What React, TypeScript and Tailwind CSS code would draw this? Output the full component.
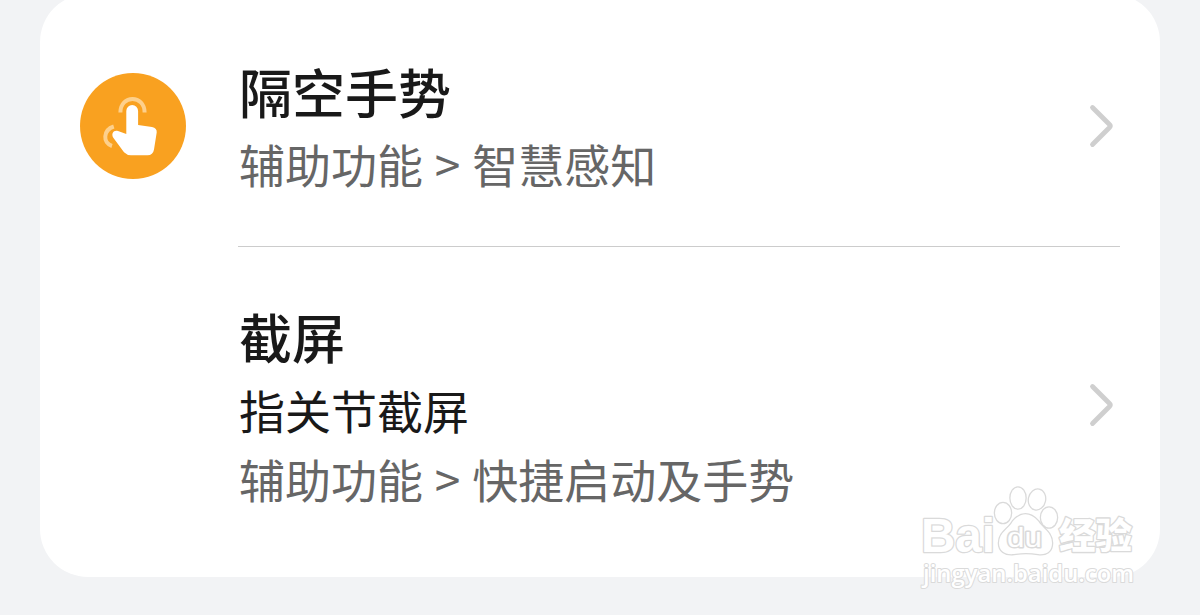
import React from "react";

interface SettingRowProps {
  title: string;
  detail?: string;
  path: string;
}

const GestureIcon = () => (
  <svg className="block size-[106px]" viewBox="0 0 106 106" fill="none">
    <circle cx="53" cy="53" r="53" fill="#F9A120" />
    <path
      d="M46.3 38a5.9 5.9 0 0 1 11.8 0V52L72 54Q77.2 55 76.7 59.5L74 76.5Q73 82.3 67.5 82.3H51Q47 82.3 44 79.3L33.5 65C30.5 60.5 34 56.5 38 58L46.3 61Z"
      fill="#fff"
    />
    <path d="M40.4 39.5C40.4 21.5 64.6 21.5 64.6 39.5" stroke="#FDD08C" strokeWidth="4" />
    <path d="M33.8 53.5C23 57 22.5 70 32 73" stroke="#FDD08C" strokeWidth="4" />
  </svg>
);

const Chevron = () => (
  <svg className="block h-[48px] w-[32px]" viewBox="0 0 32 48" fill="none">
    <path
      d="M7.5 5.5L24.5 22.5Q26 24 24.5 25.5L7.5 42.5"
      stroke="#CFCFCF"
      strokeWidth="4.8"
      strokeLinecap="round"
    />
  </svg>
);

const SettingRow: React.FC<SettingRowProps> = ({ title, detail, path }) => {
  return (
    <div className="min-w-0 flex-1 whitespace-nowrap">
      <h2 className="text-[53px] leading-[76px] font-medium text-[#191919]">{title}</h2>
      {detail && (
        <p className="text-[46px] leading-[70px] text-[#191919]">{detail}</p>
      )}
      <p className="text-[46px] leading-[69px] text-[#666] [word-spacing:1.5px]">{path}</p>
    </div>
  );
};

// outlines are painted under the fill, so the letters stay solid white
const Watermark = () => (
  <svg
    className="absolute left-[912px] top-[480px] h-[116px] w-[236px]"
    viewBox="912 480 236 116"
    fill="#fff"
    stroke="#DADADA"
    strokeWidth="2.6"
    strokeLinejoin="round"
    paintOrder="stroke"
  >
    <text x="921" y="552" textLength="74" lengthAdjust="spacingAndGlyphs" fontSize="48" fontWeight="700" className="font-['Liberation_Sans',sans-serif]">
      Bai
    </text>
    <ellipse cx="1003" cy="513" rx="8" ry="10" />
    <ellipse cx="1018" cy="498" rx="7.5" ry="10.5" />
    <ellipse cx="1037" cy="499.5" rx="8" ry="10" transform="rotate(12 1037 499.5)" />
    <ellipse cx="1049" cy="517.5" rx="8" ry="10" />
    <path d="M1013 521C1021 512 1030 512 1038 521C1042 528 1052 532 1052 543C1052 552 1046 555 1038 554Q1026 552 1014 554C1005 555 999 551 999 543C999 532 1009 529 1013 521Z" />
    <text x="1007" y="547" textLength="35" lengthAdjust="spacingAndGlyphs" fontSize="28" strokeWidth="3" className="font-['Liberation_Sans',sans-serif]">
      du
    </text>
    <text x="1059" y="549" textLength="73" lengthAdjust="spacingAndGlyphs" fontSize="36" fontWeight="900" className="font-['Noto_Sans_CJK_SC',sans-serif]">
      经验
    </text>
    <text x="923" y="582" textLength="211" lengthAdjust="spacingAndGlyphs" fontSize="24" fontWeight="600" strokeWidth="2" className="font-['Open_Sans',sans-serif]">
      jingyan.baidu.com
    </text>
  </svg>
);

export default function App() {
  return (
    <div className="relative h-[615px] w-[1200px] overflow-hidden bg-[#F2F3F5] px-10 font-['Noto_Sans_CJK_SC',sans-serif]">
      <div className="-mt-[6px] h-[583px] rounded-[48px] bg-white pt-[6px]">
        <div className="flex h-[246px] pl-10 pr-[43px]">
          <div className="mt-[73px] mr-[53px]">
            <GestureIcon />
          </div>
          <div className="flex flex-1 pt-[53px]">
            <SettingRow title="隔空手势" path="辅助功能 > 智慧感知" />
            <div className="mt-[49px]">
              <Chevron />
            </div>
          </div>
        </div>
        <div className="ml-[198px] mr-10 h-px bg-[#CCC]" />
        <div className="flex pl-[199px] pr-[43px] pt-[51px]">
          <SettingRow title="截屏" detail="指关节截屏" path="辅助功能 > 快捷启动及手势" />
          <div className="mt-[83px]">
            <Chevron />
          </div>
        </div>
      </div>
      <Watermark />
    </div>
  );
}
